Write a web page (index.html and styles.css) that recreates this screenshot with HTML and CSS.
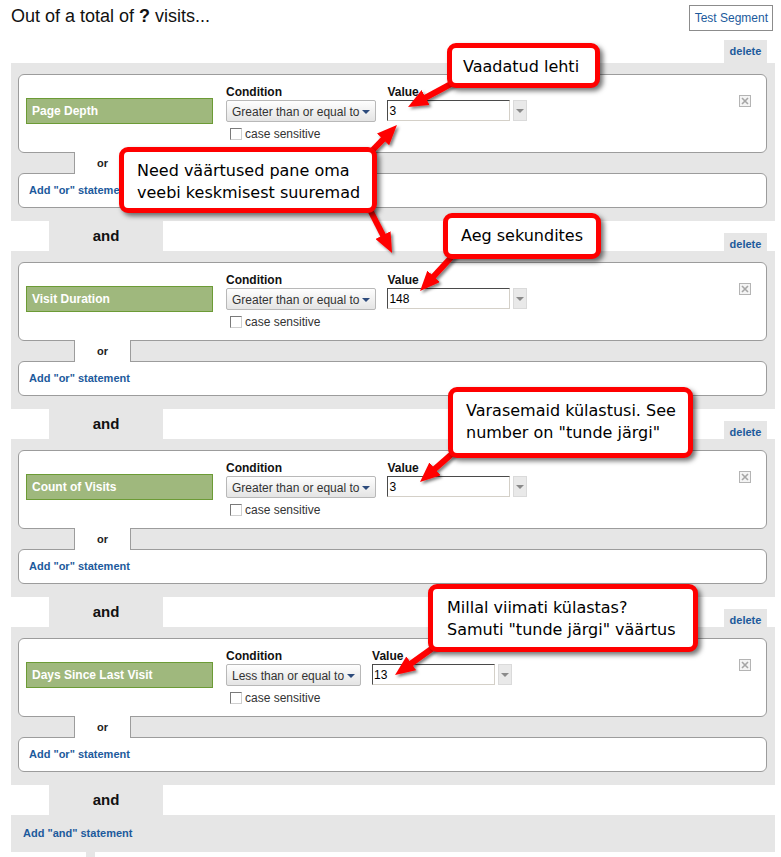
FILE: index.html
```html
<!DOCTYPE html>
<html>
  <head>
    <meta charset='utf-8'>
    <title>Segment conditions</title>
    <link rel="stylesheet" href="styles.css">
  </head>
  <body>
    <div class="page">
      <div class="top">
        <h1 class="title">Out of a total of <b>?</b> visits...</h1>
        <a class="test-btn">Test Segment</a>
      </div>

      <div class="seg-head first"><span class="delete">delete</span></div>
      <div class="block">
        <div class="card">
          <div class="field">Page Depth</div>
          <div class="cond">
            <div class="label">Condition</div>
            <div class="select">Greater than or equal to<i class="caret"></i></div>
            <div class="check-row"><span class="checkbox"></span>case sensitive</div>
          </div>
          <div class="val">
            <div class="label">Value</div>
            <div class="value-row"><div class="input">3</div><div class="drop"><i class="caret gray"></i></div></div>
          </div>
          <svg class="close" width="12" height="12" viewBox="0 0 12 12"><rect x="0.5" y="0.5" width="11" height="11" fill="#f4f4f4" stroke="#b4b4b4"/><path d="M3 3L9 9M9 3L3 9" stroke="#a6a6a6" stroke-width="1.6"/></svg>
        </div>
        <div class="or-row"><div class="or-tab">or</div></div>
        <div class="add-or">Add "or" statement</div>
      </div>

      <div class="seg-head"><span class="and">and</span><span class="delete">delete</span></div>
      <div class="block">
        <div class="card">
          <div class="field">Visit Duration</div>
          <div class="cond">
            <div class="label">Condition</div>
            <div class="select">Greater than or equal to<i class="caret"></i></div>
            <div class="check-row"><span class="checkbox"></span>case sensitive</div>
          </div>
          <div class="val">
            <div class="label">Value</div>
            <div class="value-row"><div class="input">148</div><div class="drop"><i class="caret gray"></i></div></div>
          </div>
          <svg class="close" width="12" height="12" viewBox="0 0 12 12"><rect x="0.5" y="0.5" width="11" height="11" fill="#f4f4f4" stroke="#b4b4b4"/><path d="M3 3L9 9M9 3L3 9" stroke="#a6a6a6" stroke-width="1.6"/></svg>
        </div>
        <div class="or-row"><div class="or-tab">or</div></div>
        <div class="add-or">Add "or" statement</div>
      </div>

      <div class="seg-head"><span class="and">and</span><span class="delete">delete</span></div>
      <div class="block">
        <div class="card">
          <div class="field">Count of Visits</div>
          <div class="cond">
            <div class="label">Condition</div>
            <div class="select">Greater than or equal to<i class="caret"></i></div>
            <div class="check-row"><span class="checkbox"></span>case sensitive</div>
          </div>
          <div class="val">
            <div class="label">Value</div>
            <div class="value-row"><div class="input">3</div><div class="drop"><i class="caret gray"></i></div></div>
          </div>
          <svg class="close" width="12" height="12" viewBox="0 0 12 12"><rect x="0.5" y="0.5" width="11" height="11" fill="#f4f4f4" stroke="#b4b4b4"/><path d="M3 3L9 9M9 3L3 9" stroke="#a6a6a6" stroke-width="1.6"/></svg>
        </div>
        <div class="or-row"><div class="or-tab">or</div></div>
        <div class="add-or">Add "or" statement</div>
      </div>

      <div class="seg-head"><span class="and">and</span><span class="delete">delete</span></div>
      <div class="block">
        <div class="card">
          <div class="field">Days Since Last Visit</div>
          <div class="cond">
            <div class="label">Condition</div>
            <div class="select">Less than or equal to<i class="caret"></i></div>
            <div class="check-row"><span class="checkbox"></span>case sensitive</div>
          </div>
          <div class="val">
            <div class="label">Value</div>
            <div class="value-row"><div class="input">13</div><div class="drop"><i class="caret gray"></i></div></div>
          </div>
          <svg class="close" width="12" height="12" viewBox="0 0 12 12"><rect x="0.5" y="0.5" width="11" height="11" fill="#f4f4f4" stroke="#b4b4b4"/><path d="M3 3L9 9M9 3L3 9" stroke="#a6a6a6" stroke-width="1.6"/></svg>
        </div>
        <div class="or-row"><div class="or-tab">or</div></div>
        <div class="add-or">Add "or" statement</div>
      </div>

      <div class="seg-head"><span class="and">and</span></div>
      <div class="add-and">Add "and" statement</div>
      <div class="stub"></div>
    </div>

    <!-- annotation arrows -->
    <svg class="arrows" width="781" height="857" viewBox="0 0 781 857">
      <defs>
        <marker id="head" viewBox="0 0 20 17" refX="8" refY="8.5" markerWidth="20" markerHeight="17" markerUnits="userSpaceOnUse" orient="auto">
          <path d="M0 0L20 8.5L0 17z" fill="#f00"/>
        </marker>
        <filter id="shadow" x="-20%" y="-20%" width="140%" height="140%">
          <feDropShadow dx="2" dy="2" stdDeviation="1.5" flood-color="#000" flood-opacity="0.5"/>
        </filter>
      </defs>
      <g stroke="#f00" stroke-width="6" marker-end="url(#head)" filter="url(#shadow)">
        <line x1="462" y1="78" x2="418.6" y2="101.3"/>
        <line x1="365" y1="158" x2="388.6" y2="133.6"/>
        <line x1="365" y1="200" x2="386.6" y2="242.3"/>
        <line x1="458" y1="250" x2="428.2" y2="282.2"/>
        <line x1="462" y1="445" x2="429" y2="474.1"/>
        <line x1="444" y1="640" x2="404.8" y2="668"/>
      </g>
    </svg>

    <div class="callout c1">Vaadatud lehti</div>
    <div class="callout c2">Need väärtused pane oma<br>veebi keskmisest suuremad</div>
    <div class="callout c3">Aeg sekundites</div>
    <div class="callout c4">Varasemaid külastusi. See<br>number on "tunde järgi"</div>
    <div class="callout c5">Millal viimati külastas?<br>Samuti "tunde järgi" väärtus</div>
  </body>
</html>
```

FILE: styles.css
```css
html, body {
    margin: 0;
    padding: 0;
}
body {
    background-color: #fff;
    font-family: "Liberation Sans", Arial, sans-serif;
    color: #111;
    position: relative;
    width: 781px;
    height: 857px;
    overflow: hidden;
}
.page {
    padding: 0 6px 0 11px;
}
.top {
    display: flex;
    justify-content: space-between;
    align-items: flex-start;
    height: 40px;
}
.title {
    margin: 0;
    padding-top: 6px;
    font-size: 18px;
    font-weight: normal;
    line-height: 21px;
}
.test-btn {
    margin-top: 5px;
    margin-right: 2px;
    height: 26px;
    box-sizing: border-box;
    border: 1px solid #8c8c8c;
    padding: 0 4px 0 5px;
    line-height: 24px;
    font-size: 12px;
    color: #1c5a9c;
}
.seg-head {
    display: flex;
    align-items: flex-end;
    height: 30px;
}
.seg-head.first {
    height: 23px;
}
.and {
    margin-left: 38px;
    width: 114px;
    height: 30px;
    background: #e6e6e6;
    text-align: center;
    line-height: 30px;
    font-size: 15px;
    font-weight: bold;
    color: #111;
}
.delete {
    margin-left: auto;
    margin-right: 8px;
    width: 43px;
    height: 18px;
    background: #e6e6e6;
    text-align: center;
    line-height: 22px;
    font-size: 11px;
    font-weight: bold;
    color: #1c5a9c;
}
.first .delete {
    height: 23px;
    line-height: 23px;
}
.block {
    background: #e6e6e6;
    padding: 11px 8px 13px 7px;
}
.card {
    display: flex;
    align-items: flex-start;
    height: 79px;
    box-sizing: border-box;
    padding: 10px 15px 0 7px;
    background: #fff;
    border: 1px solid #9c9c9c;
    border-radius: 6px;
}
.field {
    margin-top: 13px;
    width: 187px;
    height: 26px;
    box-sizing: border-box;
    padding-left: 5px;
    background: #9fb87d;
    border: 1px solid #6c9b36;
    color: #fff;
    font-size: 12px;
    font-weight: bold;
    line-height: 25px;
}
.cond {
    margin-left: 13px;
}
.label {
    height: 14px;
    line-height: 14px;
    font-size: 12px;
    font-weight: bold;
    color: #111;
}
.select {
    margin-top: 1px;
    display: inline-flex;
    align-items: center;
    gap: 3px;
    height: 22px;
    box-sizing: border-box;
    padding: 1px 5px 0;
    border: 1px solid #b8b8b8;
    border-radius: 2px;
    background: linear-gradient(#fefefe, #e4e4e4);
    font-size: 12px;
    color: #333;
}
.caret {
    display: inline-block;
    width: 0;
    height: 0;
    border-left: 4px solid transparent;
    border-right: 4px solid transparent;
    border-top: 4px solid #2d4b7c;
}
.caret.gray {
    border-top-color: #8a8a8a;
}
.check-row {
    margin-top: 5px;
    margin-left: 4px;
    display: flex;
    align-items: center;
    gap: 3px;
    height: 14px;
    font-size: 12px;
    color: #333;
}
.checkbox {
    width: 12px;
    height: 12px;
    box-sizing: border-box;
    border: 1px solid;
    border-color: #7a7a7a #cfcfcf #cfcfcf #7a7a7a;
    background: #fff;
}
.val {
    margin-left: 11px;
}
.value-row {
    margin-top: 1px;
    display: flex;
    gap: 3px;
}
.input {
    width: 123px;
    height: 21px;
    box-sizing: border-box;
    padding-left: 1px;
    border: 1px solid;
    border-color: #4a4a4a #d4d0c8 #d4d0c8 #4a4a4a;
    background: #fff;
    font-size: 12px;
    line-height: 20px;
    color: #000;
}
.drop {
    display: flex;
    align-items: center;
    justify-content: center;
    width: 14px;
    height: 21px;
    box-sizing: border-box;
    border: 1px solid #dadada;
    background: #e9e9e9;
}
.close {
    margin-left: auto;
    margin-top: 10px;
}
.or-row {
    display: flex;
    height: 20px;
}
.or-tab {
    position: relative;
    margin-left: 56px;
    margin-top: -1px;
    width: 57px;
    height: 22px;
    flex: none;
    box-sizing: border-box;
    background: #fff;
    border-left: 1px solid #9c9c9c;
    border-right: 1px solid #9c9c9c;
    text-align: center;
    line-height: 22px;
    font-size: 11px;
    font-weight: bold;
    color: #222;
}
.add-or {
    height: 35px;
    box-sizing: border-box;
    padding-left: 10px;
    background: #fff;
    border: 1px solid #9c9c9c;
    border-radius: 6px;
    line-height: 33px;
    font-size: 11px;
    font-weight: bold;
    color: #1c5a9c;
}
.add-and {
    height: 37px;
    padding-left: 12px;
    background: #e6e6e6;
    line-height: 36px;
    font-size: 11px;
    font-weight: bold;
    color: #1c5a9c;
}
.stub {
    margin-left: 75px;
    width: 9px;
    height: 5px;
    background: #e6e6e6;
}
/* annotations drawn over the screenshot */
.arrows {
    position: absolute;
    top: 0;
    left: 0;
    pointer-events: none;
}
.callout {
    position: absolute;
    box-sizing: border-box;
    border: 5px solid #f00;
    border-radius: 9px;
    background: #fff;
    box-shadow: 3px 3px 5px rgba(0, 0, 0, 0.55);
    font-family: "DejaVu Sans", Verdana, sans-serif;
    font-size: 16px;
    line-height: 22px;
    color: #000;
    white-space: nowrap;
}
.c1 {
    left: 447px;
    top: 43px;
    width: 153px;
    height: 45px;
    padding: 8px 0 0 11px;
}
.c2 {
    left: 119px;
    top: 147px;
    width: 258px;
    height: 66px;
    padding: 8px 0 0 13px;
}
.c3 {
    left: 443px;
    top: 213px;
    width: 158px;
    height: 46px;
    padding: 7px 0 0 13px;
}
.c4 {
    left: 448px;
    top: 387px;
    width: 245px;
    height: 71px;
    padding: 8px 0 0 13px;
}
.c5 {
    left: 428px;
    top: 584px;
    width: 270px;
    height: 68px;
    padding: 8px 0 0 14px;
}
```
